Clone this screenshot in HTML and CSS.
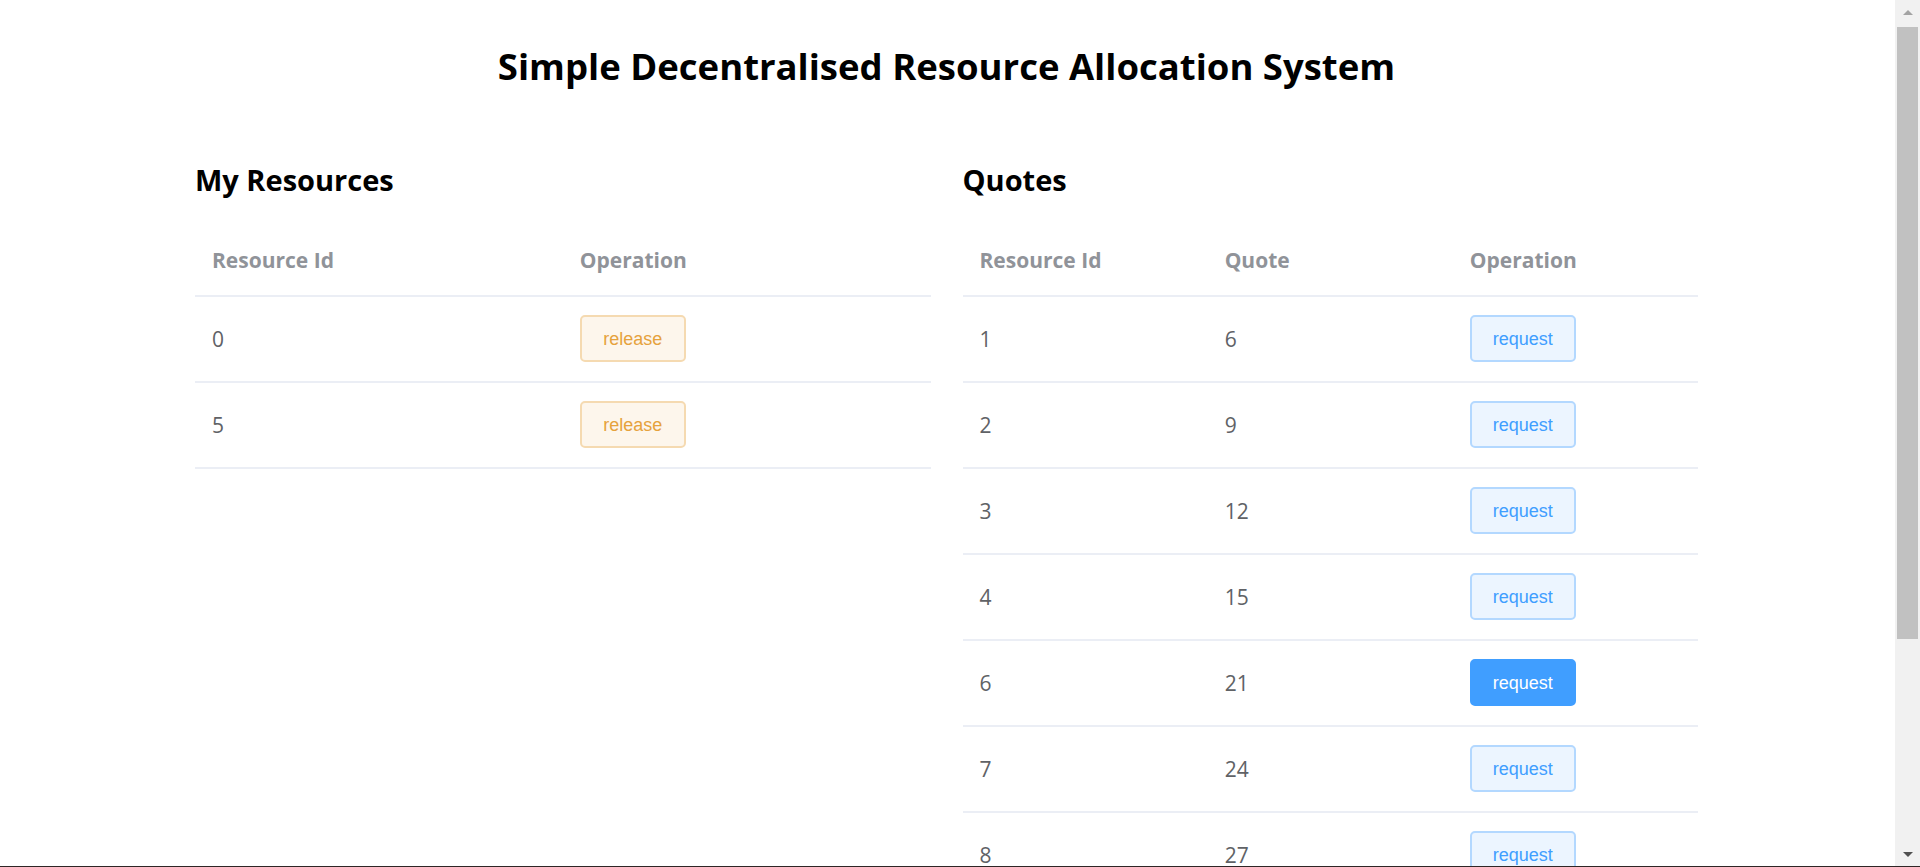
FILE: index.html
```html
<!DOCTYPE html>
<html lang="en">
<head>
<meta charset="utf-8">
<title>Simple Decentralised Resource Allocation System</title>
<link rel="stylesheet" href="styles.css">
</head>
<body>
<div class="page">
  <h1 class="title">Simple Decentralised Resource Allocation System</h1>
  <div class="columns">
    <section class="panel">
      <h2 class="panel-title">My Resources</h2>
      <table class="data-table">
        <thead>
          <tr><th>Resource Id</th><th>Operation</th></tr>
        </thead>
        <tbody>
          <tr><td><div class="cell">0</div></td><td><div class="cell"><button class="btn btn-warning">release</button></div></td></tr>
          <tr><td><div class="cell">5</div></td><td><div class="cell"><button class="btn btn-warning">release</button></div></td></tr>
        </tbody>
      </table>
    </section>
    <section class="panel">
      <h2 class="panel-title">Quotes</h2>
      <table class="data-table">
        <thead>
          <tr><th>Resource Id</th><th>Quote</th><th>Operation</th></tr>
        </thead>
        <tbody>
          <tr><td><div class="cell">1</div></td><td><div class="cell">6</div></td><td><div class="cell"><button class="btn btn-primary">request</button></div></td></tr>
          <tr><td><div class="cell">2</div></td><td><div class="cell">9</div></td><td><div class="cell"><button class="btn btn-primary">request</button></div></td></tr>
          <tr><td><div class="cell">3</div></td><td><div class="cell">12</div></td><td><div class="cell"><button class="btn btn-primary">request</button></div></td></tr>
          <tr><td><div class="cell">4</div></td><td><div class="cell">15</div></td><td><div class="cell"><button class="btn btn-primary">request</button></div></td></tr>
          <tr><td><div class="cell">6</div></td><td><div class="cell">21</div></td><td><div class="cell"><button class="btn btn-primary is-active">request</button></div></td></tr>
          <tr><td><div class="cell">7</div></td><td><div class="cell">24</div></td><td><div class="cell"><button class="btn btn-primary">request</button></div></td></tr>
          <tr><td><div class="cell">8</div></td><td><div class="cell">27</div></td><td><div class="cell"><button class="btn btn-primary">request</button></div></td></tr>
          <tr><td><div class="cell">9</div></td><td><div class="cell">30</div></td><td><div class="cell"><button class="btn btn-primary">request</button></div></td></tr>
          <tr><td><div class="cell">10</div></td><td><div class="cell">33</div></td><td><div class="cell"><button class="btn btn-primary">request</button></div></td></tr>
          <tr><td><div class="cell">11</div></td><td><div class="cell">36</div></td><td><div class="cell"><button class="btn btn-primary">request</button></div></td></tr>
        </tbody>
      </table>
    </section>
  </div>
</div>
<div class="scrollbar" aria-hidden="true">
  <div class="sb-button"><span class="sb-arrow sb-arrow-up"></span></div>
  <div class="sb-track"><div class="sb-thumb"></div></div>
  <div class="sb-button"><span class="sb-arrow sb-arrow-down"></span></div>
</div>
<div class="window-edge" aria-hidden="true"></div>
</body>
</html>
```
FILE: styles.css
```css
body {
  margin: 0;
  background: #ffffff;
  font-family: "Open Sans", "Noto Sans", sans-serif;
  color: #000000;
}

.page {
  width: 1503px;
  margin-left: 195px;
  padding-top: 41px;
  padding-bottom: 21px;
}

.title {
  margin: 0;
  font-size: 36.5px;
  line-height: 50px;
  font-weight: 700;
  text-align: center;
}

.columns {
  display: grid;
  grid-template-columns: 1fr 1fr;
  column-gap: 32px;
  align-items: start;
  margin-top: 69px;
}

.panel-title {
  margin: 0;
  font-size: 29px;
  line-height: 40px;
  font-weight: 700;
}

.data-table {
  width: 100%;
  margin-top: 25px;
  border-collapse: separate;
  border-spacing: 0;
  table-layout: fixed;
}

.data-table th {
  padding: 18px 17px;
  line-height: 34px;
  font-size: 21px;
  font-weight: 700;
  color: #909399;
  text-align: left;
  border-bottom: 2px solid #ebeef5;
}

.data-table td {
  padding: 18px 17px 19px;
  font-size: 21px;
  color: #606266;
  border-bottom: 2px solid #ebeef5;
}

.cell {
  display: flex;
  align-items: center;
  height: 47px;
}

.btn {
  box-sizing: border-box;
  width: 106px;
  height: 47px;
  padding: 0;
  border: 2px solid;
  border-radius: 5px;
  font-family: "Liberation Sans", Arial, sans-serif;
  font-size: 18px;
  line-height: 1;
  cursor: pointer;
}

.btn-warning {
  color: #e6a23c;
  background: #fdf6ec;
  border-color: #f5dab1;
}

.btn-primary {
  color: #409eff;
  background: #ecf5ff;
  border-color: #b3d8ff;
}

.btn-primary.is-active {
  color: #ffffff;
  background: #409eff;
  border-color: #409eff;
}

/* Windows-style vertical scrollbar drawn over the right edge */
.scrollbar {
  position: fixed;
  top: 0;
  right: 0;
  width: 25px;
  height: 100vh;
  background: #f1f1f1;
  display: flex;
  flex-direction: column;
}

.sb-button {
  flex: 0 0 25px;
  display: flex;
  align-items: center;
  justify-content: center;
}

.sb-arrow {
  width: 0;
  height: 0;
  border-left: 5.5px solid transparent;
  border-right: 5.5px solid transparent;
}

.sb-arrow-up {
  border-bottom: 5px solid #a3a3a3;
}

.sb-arrow-down {
  border-top: 5px solid #505050;
}

.sb-track {
  flex: 1;
  padding: 2px 2px 0;
}

.sb-thumb {
  height: 612px;
  background: #c1c1c1;
}

.window-edge {
  position: fixed;
  left: 0;
  right: 0;
  bottom: 0;
  height: 1px;
  background: #2e2626;
}
```
